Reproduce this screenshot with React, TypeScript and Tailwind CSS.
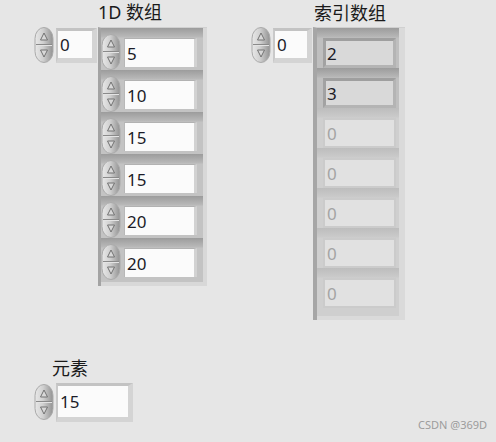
import { useId } from 'react';

const arr1 = [5, 10, 15, 15, 20, 20];
const arr2 = [2, 3, 0, 0, 0, 0, 0];

function Spinner({ className = '' }: { className?: string }) {
  const id = useId();
  return (
    <svg className={`shrink-0 ${className}`} width="20" height="36" viewBox="0 0 20 36">
      <defs>
        <linearGradient id={id} x1="0" x2="1" y1="0" y2="0">
          <stop offset="0" stopColor="#e8e8e8" />
          <stop offset="0.45" stopColor="#d0d0d0" />
          <stop offset="1" stopColor="#929292" />
        </linearGradient>
      </defs>
      <rect x="1" y="0.5" width="18" height="35" rx="9" ry="11" fill={`url(#${id})`} stroke="#aaaaaa" />
      <line x1="2" y1="17.5" x2="18" y2="17.5" stroke="#8a8a8a" />
      <line x1="2" y1="18.5" x2="18" y2="18.5" stroke="#e4e4e4" />
      <path d="M10 6 L6.5 13 H13.5 Z" fill="#d8d8d8" stroke="#727272" />
      <path d="M6.5 23 H13.5 L10 30 Z" fill="#d8d8d8" stroke="#727272" />
    </svg>
  );
}

// numeric control on the panel: spinner + white box
function NumControl({ value, boxClass }: { value: number; boxClass: string }) {
  return (
    <div className="flex items-start gap-[2px]">
      <Spinner />
      <div
        className={`flex items-center bg-[#fbfbfb] border-t-[3px] border-l-[2px] border-r-[5px] border-b-[5px] border-t-[#c3c3c3] border-l-[#c9c9c9] border-r-[#d4d4d4] border-b-[#d4d4d4] pl-[2px] text-[17px] leading-none text-[#1c1c28] ${boxClass}`}
      >
        {value}
      </div>
    </div>
  );
}

function Label({ text, className }: { text: string; className: string }) {
  return <div className={`text-[18px] leading-[22px] text-[#1a1a1a] whitespace-nowrap ${className}`}>{text}</div>;
}

function ControlArray() {
  return (
    <div className="border-l-[3px] border-l-[#a3a3a3] border-t border-t-[#d0d0d0] bg-[#d8d8d8] pr-[4px] pb-[4px]">
      <div className="w-[102px] bg-[#c3c3c3] pb-[2px]">
        {arr1.map((v, i) => (
          <div
            key={i}
            className="h-[42px] flex items-start bg-[linear-gradient(to_bottom,#9c9c9c,#b9b9b9_9px,#c3c3c3_10px)]"
          >
            <Spinner className="mt-[6px]" />
            <div className="mt-[10px] ml-[3px] w-[73px] h-[29px] flex items-center bg-[#fbfbfb] border-t border-l border-t-[#b2b2b2] border-l-[#b8b8b8] border-r-[3px] border-r-[#d2d2d2] pl-[2px] text-[17px] leading-none text-[#1c1c28]">
              {v}
            </div>
          </div>
        ))}
      </div>
    </div>
  );
}

function IndicatorArray() {
  return (
    <div className="border-l-[4px] border-l-[#a6a6a6] border-t border-t-[#d0d0d0] bg-[#dadada] pr-[6px] pb-[4px]">
      <div className="w-[82px] bg-[#cfcfcf] pb-[8px]">
        {arr2.map((v, i) =>
          i < 2 ? (
            <div key={i} className="h-[40px] pt-[10px] pl-[6px] bg-[linear-gradient(to_bottom,#9c9c9c,#b7b7b7_9px,#bfbfbf_10px)]">
              <div className="w-[73px] h-[30px] flex items-center bg-[#d9d9d9] border-[3px] border-t-[#9f9f9f] border-l-[#a2a2a2] border-r-[#b4b4b4] border-b-[#b4b4b4] pl-[1px] text-[17px] leading-none text-[#1c1c28]">
                {v}
              </div>
            </div>
          ) : (
            <div key={i} className="h-[40px] pt-[10px] pl-[6px] bg-[linear-gradient(to_bottom,#bdbdbd,#cacaca_9px,#cfcfcf_10px)]">
              <div className="w-[73px] h-[30px] flex items-center bg-[#e1e1e1] border-[2px] border-[#cbcbcb] pl-[2px] text-[17px] leading-none text-[#a4a4a4]">
                {v}
              </div>
            </div>
          )
        )}
      </div>
    </div>
  );
}

export default function App() {
  return (
    <div className="relative w-[496px] h-[442px] overflow-hidden bg-[#e6e6e6] font-['Noto_Sans','Noto_Sans_CJK_SC',sans-serif]">
      {/* front panel objects: placed freely on the LabVIEW canvas */}
      <div className="absolute left-[34px] top-[1px] flex flex-col">
        <Label text="1D 数组" className="ml-[64px]" />
        <div className="mt-[4px] flex items-start gap-px">
          <NumControl value={0} boxClass="w-[41px] h-[35px] mt-[1px]" />
          <ControlArray />
        </div>
      </div>

      <div className="absolute left-[251px] top-[2px] flex flex-col">
        <Label text="索引数组" className="ml-[63px]" />
        <div className="mt-[3px] flex items-start gap-px">
          <NumControl value={0} boxClass="w-[39px] h-[35px] mt-[1px]" />
          <IndicatorArray />
        </div>
      </div>

      <div className="absolute left-[34px] top-[357px] flex flex-col">
        <Label text="元素" className="ml-[18px]" />
        <div className="mt-[5px]">
          <NumControl value={15} boxClass="w-[77px] h-[39px] -mt-[1px]" />
        </div>
      </div>

      <div className="absolute left-[418px] top-[418px] text-[11px] leading-[14px] text-[#9c9c9c]">CSDN @369D</div>
    </div>
  );
}
